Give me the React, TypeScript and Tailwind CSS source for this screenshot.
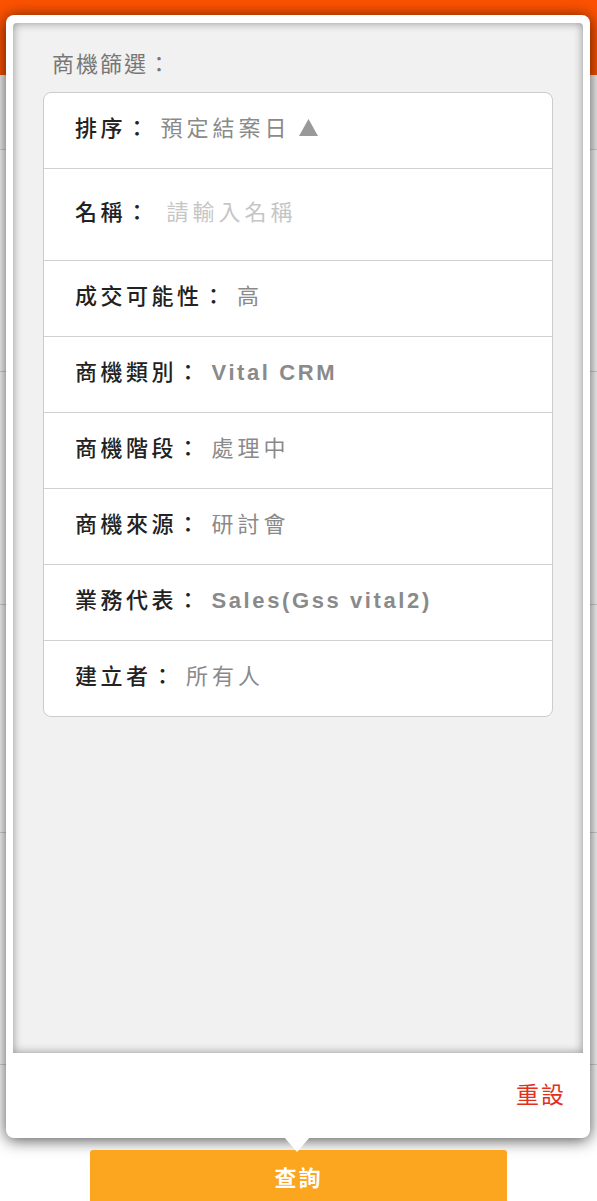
import React from "react";

const font = { fontFamily: '"Liberation Sans", "Noto Sans CJK TC", sans-serif' };

type Row = { label: string; value: string; latin?: boolean; placeholder?: boolean; tall?: boolean; arrow?: boolean };

const rows: Row[] = [
  { label: "排序：", value: "預定結案日", arrow: true },
  { label: "名稱：", value: "請輸入名稱", placeholder: true, tall: true },
  { label: "成交可能性：", value: "高" },
  { label: "商機類別：", value: "Vital CRM", latin: true },
  { label: "商機階段：", value: "處理中" },
  { label: "商機來源：", value: "研討會" },
  { label: "業務代表：", value: "Sales(Gss vital2)", latin: true },
  { label: "建立者：", value: "所有人" },
];

export default function App() {
  return (
    <div className="relative w-[597px] h-[1201px] overflow-hidden bg-white" style={font}>
      {/* background page */}
      <div className="flex flex-col">
        <div className="h-[75px] bg-[#fc5200]" />
        <div className="h-[75px] border-b border-[#d8d8d8] bg-[#f4f4f4]" />
        <div className="h-[222px] border-b border-[#d8d8d8]" />
        <div className="h-[233px] border-b border-[#d8d8d8]" />
        <div className="h-[228px] border-b border-[#d8d8d8]" />
        <div className="h-[232px] border-b border-[#d8d8d8]" />
      </div>

      {/* popup */}
      <div className="absolute left-[6px] top-[15px] w-[584px] h-[1123px] bg-white rounded-[8px] shadow-[0_2px_16px_rgba(0,0,0,0.7)] flex flex-col px-[7px] pt-[8px]">
        <div className="h-[1030px] bg-[#f1f1f1] rounded-t-[4px] shadow-[inset_0_0_10px_rgba(0,0,0,0.4)] flex flex-col pt-[30px]">
          <div className="pl-[39px] text-[22px] leading-[24px] text-[#777777] tracking-[2px]">商機篩選：</div>
          <div className="mx-[30px] mt-[15px] bg-white border border-[#cccccc] rounded-[8px] flex flex-col">
            {rows.map((r, i) => (
              <div
                key={i}
                className={`flex items-center pl-[31px] pb-[4px] ${i === 0 ? "h-[75px]" : r.tall ? "h-[92px]" : "h-[76px]"} ${i > 0 ? "border-t border-[#d0d0d0]" : ""}`}
              >
                <span className="text-[22px] text-[#222222] tracking-[3.5px] font-medium">{r.label}</span>
                <span
                  className={`${r.placeholder ? "ml-[15px] text-[#c6c6c6]" : "ml-[9px] text-[#8a8a8a]"} text-[22px] ${r.latin ? "font-bold tracking-[2.6px]" : "tracking-[4px]"}`}
                >
                  {r.value}
                </span>
                {r.arrow && (
                  <svg className="ml-[8px] mb-[2px]" width="19" height="17" viewBox="0 0 19 17">
                    <polygon points="9.5,0 19,17 0,17" fill="#999999" />
                  </svg>
                )}
              </div>
            ))}
          </div>
        </div>
        <div className="flex-1 flex items-center justify-end pr-[17px]">
          <span className="text-[23px] text-[#e2301c] tracking-[2px]">重設</span>
        </div>
      </div>

      {/* bottom button */}
      <div className="absolute left-[90px] top-[1150px] w-[417px] h-[56px] bg-[#fca51f] rounded-t-[3px] flex items-center justify-center">
        <span className="text-[22px] font-bold text-white tracking-[2px]">查詢</span>
      </div>

      {/* arrow */}
      <div className="absolute left-[284px] top-[1137px] w-0 h-0 border-l-[13px] border-r-[13px] border-t-[15px] border-l-transparent border-r-transparent border-t-white" />
    </div>
  );
}
